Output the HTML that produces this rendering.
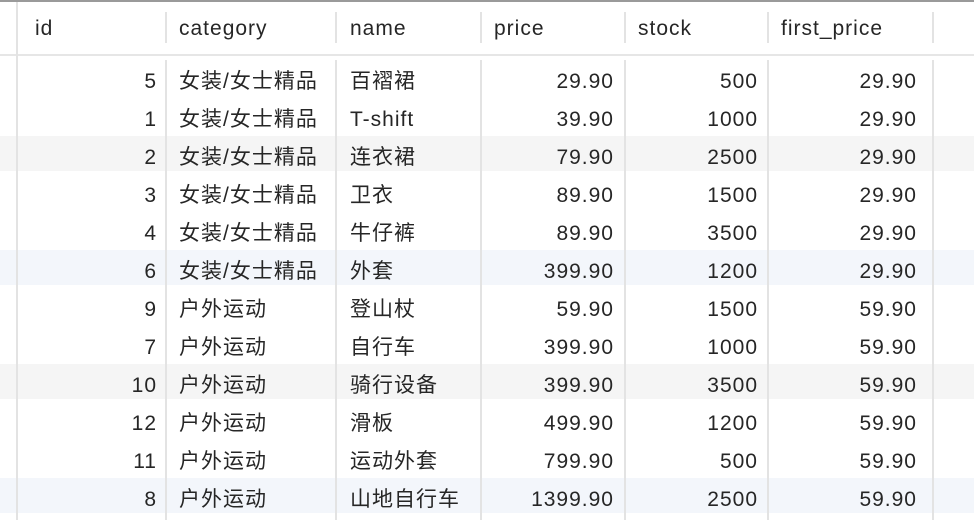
<!DOCTYPE html><html><head><meta charset="utf-8"><style>
body{margin:0;width:974px;height:520px;background:#fff;position:relative;overflow:hidden;font-family:"Liberation Sans","Noto Sans CJK SC",sans-serif;font-size:21px;letter-spacing:1px;color:#262626}
.a{position:absolute}
.top{left:0;top:0;width:974px;height:2px;background:#9a9a9a}
.hl{left:0;top:54px;width:974px;height:2px;background:#e6e6e6}
.vl{width:2px;background:#e3e3e3;z-index:2}
.t{line-height:38px;white-space:nowrap;z-index:3}
.r{text-align:right}
.bg{z-index:1}
</style></head><body>
<div class="a top"></div>
<div class="a vl" style="left:16px;top:2px;height:518px"></div>
<div class="a hl"></div>
<div id="c"></div>
<script>
var xs=[165,335,480,624,767,932];
var h='';
xs.forEach(function(x){h+='<div class="a vl" style="left:'+x+'px;top:12px;height:31px"></div><div class="a vl" style="left:'+x+'px;top:60px;height:460px"></div>';});
var hd=[['id',35],['category',179],['name',350],['price',494],['stock',638],['first_price',781]];
hd.forEach(function(d){h+='<div class="a t" style="left:'+d[1]+'px;top:10px">'+d[0]+'</div>';});
var rows=[[5,'女装/女士精品','百褶裙','29.90',500,'29.90'],[1,'女装/女士精品','T-shift','39.90',1000,'29.90'],[2,'女装/女士精品','连衣裙','79.90',2500,'29.90'],[3,'女装/女士精品','卫衣','89.90',1500,'29.90'],[4,'女装/女士精品','牛仔裤','89.90',3500,'29.90'],[6,'女装/女士精品','外套','399.90',1200,'29.90'],[9,'户外运动','登山杖','59.90',1500,'59.90'],[7,'户外运动','自行车','399.90',1000,'59.90'],[10,'户外运动','骑行设备','399.90',3500,'59.90'],[12,'户外运动','滑板','499.90',1200,'59.90'],[11,'户外运动','运动外套','799.90',500,'59.90'],[8,'户外运动','山地自行车','1399.90',2500,'59.90']];
var bgs={2:'#f5f5f5',5:'#f3f6fb',8:'#f5f5f5',11:'#f3f6fb'};
rows.forEach(function(r,i){var y=61+i*38;var ty=y+2;
if(bgs[i])h+='<div class="a bg" style="left:0;top:'+(y-1)+'px;width:974px;height:35px;background:'+bgs[i]+'"></div>';
h+='<div class="a t r" style="right:'+(974-157)+'px;top:'+ty+'px">'+r[0]+'</div>';
h+='<div class="a t" style="left:179px;top:'+ty+'px">'+r[1]+'</div>';
h+='<div class="a t" style="left:350px;top:'+ty+'px">'+r[2]+'</div>';
h+='<div class="a t r" style="right:'+(974-614)+'px;top:'+ty+'px">'+r[3]+'</div>';
h+='<div class="a t r" style="right:'+(974-758)+'px;top:'+ty+'px">'+r[4]+'</div>';
h+='<div class="a t r" style="right:'+(974-917)+'px;top:'+ty+'px">'+r[5]+'</div>';
});
document.getElementById('c').innerHTML=h;
</script>
</body></html>
